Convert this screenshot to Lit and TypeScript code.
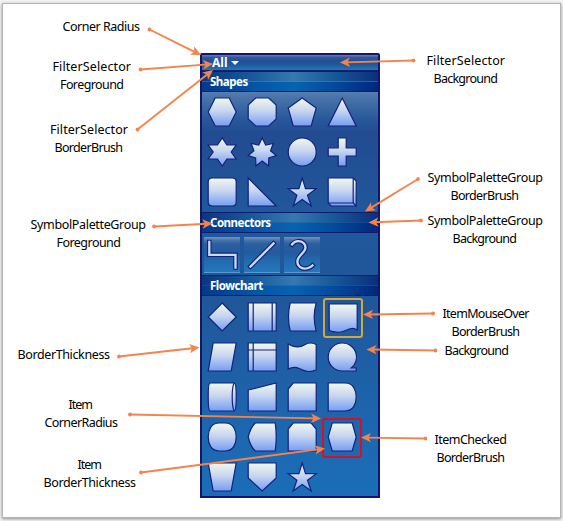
import { LitElement, html, svg, css } from "lit";
import { customElement, property } from "lit/decorators.js";

type Symbol = { d: string; detail?: string; state?: "hover" | "checked" };

const SHAPES: Symbol[] = [
  { d: "M13 6H27L34 20L27 34H13L6 20Z" },
  { d: "M13.500 6H26.500L34 13V27L26.500 34H13.500L6 27V13Z" },
  { d: "M20 6L34 16L29 34H11L6 16Z" },
  { d: "M20 6L34 34H6Z" },
  { d: "M20 6L24.700 13H34L29 20L34 27H24.700L20 34L15.300 27H6L11 20L6 13H15.300Z" },
  { d: "M20 6L23.500 13L31 11.500L28.300 18.800L34 23.500L26.600 26L26.300 34L20 29L13.700 34L13.400 26L6 23.500L11.700 18.800L9 11.500L16.500 13Z" },
  { d: "M20 6A14 14 0 1 1 20 34A14 14 0 1 1 20 6Z" },
  { d: "M16 6H24V16H34V24H24V34H16V24H6V16H16Z" },
  { d: "M10 6H30Q34 6 34 10V30Q34 34 30 34H10Q6 34 6 30V10Q6 6 10 6Z" },
  { d: "M6 6L34 34H6Z" },
  { d: "M20 6L23.3 16.7H34L25.3 23.3L29 34L20 27.5L11 34L14.7 23.3L6 16.7H16.7Z" },
  { d: "M6 6H31L34 9V34H9L6 31Z", detail: "M6 31H31V6M31 31L34 34" },
];

const FLOWCHART: Symbol[] = [
  { d: "M20 6L34 20L20 34L6 20Z" },
  { d: "M6 6H34V34H6Z", detail: "M11 6V34M30 6V34" },
  { d: "M8 6H34Q30 20 34 34H8Q4.500 20 8 6Z" },
  { d: "M7 7H35V33C27 28 23 37 14 35Q10 35 7 33.500Z", state: "hover" },
  { d: "M11 6H34L29 34H6Z" },
  { d: "M6 6H34V34H6Z", detail: "M11 6V34M6 13H34" },
  { d: "M6 7C14 12 19 10 23 7.500Q28 4.500 34 7.500V33C27 36 22 34 17 31.500Q12 29 6 32Z" },
  { d: "M20 6A14 14 0 0 1 29 31H34V34H20A14 14 0 0 1 20 6Z" },
  { d: "M8 6H32Q34 6 34 20T32 34H8Q6 34 6 20T8 6Z", detail: "M32 6Q30 9 30 20T32 34" },
  { d: "M6 13L34 6V34H6Z" },
  { d: "M11 6H34V34H6V12Z" },
  { d: "M6 6H23C31 6 34 13 34 20S31 34 23 34H6Z" },
  { d: "M17 6H23C31 6 34 13 34 20S31 34 23 34H17C9 34 6 27 6 20S9 6 17 6Z" },
  { d: "M13 6H33Q35 20 33 34H13Q8 29 6 20Q8 11 13 6Z" },
  { d: "M11 6H29L34 12V34H6V12Z" },
  { d: "M10 6H30L34 20L30 34H10L6 20Z", state: "checked" },
  { d: "M6 6H34L29 34H11Z" },
  { d: "M6 6H34V21L20 34L6 21Z" },
  { d: "M20 6L23.3 16.700H34L25.300 23.300L29 34L20 27.500L11 34L14.700 23.300L6 16.700H16.700Z" },
];

const CONNECTORS = [
  "M7.300 7V19.800H33.500V32.500",
  "M8.500 31.500L31.500 8.500",
  "M10 9.500C13 5.500 19 5 22 8.500C27 15 18 19 16 24C13.500 31 20 35 26 33C28 32.500 29.500 31.500 30.500 30.500",
];

// text, left, baseline, drawn width
const LABELS: [string, number, number, number][] = [
  ["Corner Radius", 62.5, 31, 77.5],
  ["FilterSelector", 52.5, 71, 78.5],
  ["Foreground", 60, 89, 64],
  ["FilterSelector", 50, 134, 78],
  ["BorderBrush", 54.5, 152, 68.5],
  ["SymbolPaletteGroup", 30.5, 229, 115.5],
  ["Foreground", 56.5, 247, 64.5],
  ["BorderThickness", 17.5, 359, 92.5],
  ["Item", 68.5, 409, 24.5],
  ["CornerRadius", 44.5, 427, 73.5],
  ["Item", 77.5, 469, 24.5],
  ["BorderThickness", 43.5, 487, 92.5],
  ["FilterSelector", 426.5, 65, 78.5],
  ["Background", 433.5, 83, 64.5],
  ["SymbolPaletteGroup", 427.5, 182, 115.5],
  ["BorderBrush", 450.5, 200, 68.5],
  ["SymbolPaletteGroup", 427.5, 225, 115.5],
  ["Background", 452.5, 243, 64.5],
  ["ItemMouseOver", 442.5, 318, 87],
  ["BorderBrush", 451.5, 336, 68.5],
  ["Background", 444.5, 355, 64.5],
  ["ItemChecked", 434.5, 444, 72.5],
  ["BorderBrush", 436.5, 462, 68.5],
];

const ARROWS: [number, number, number, number][] = [
  [149.5, 29.5, 201, 55],
  [140.5, 69.5, 213, 64],
  [137.5, 129.5, 213, 70],
  [413.5, 60.5, 340, 62.5],
  [418, 179, 365, 211.5],
  [421, 220.5, 368.5, 222.5],
  [433, 313.5, 363, 314.5],
  [435.5, 350.5, 366.5, 349.5],
  [425.5, 438.5, 361, 437.5],
  [154, 226.5, 212.5, 223.5],
  [119, 356.5, 199.5, 347.5],
  [130, 414.5, 321, 418.5],
  [141, 472.5, 325, 448.5],
];

@customElement("palette-symbol")
export class PaletteSymbol extends LitElement {
  @property({ attribute: false }) symbol!: Symbol;

  static styles = css`
    :host { display: block; width: 40px; height: 40px; }
    .cell { width: 40px; height: 40px; box-sizing: border-box; position: relative; }
    .cell svg { display: block; width: 40px; height: 40px; }
    .ring { position: absolute; inset: 0; box-sizing: border-box; border-radius: 3px; }
    .hover { border: 2px solid #d5a63c; inset: 1px -1px -1px 1px; }
    .checked { border: 2px solid #d8101f; inset: 1px 0 -1px 0; }
    .body { fill: url(#face); stroke: #12227a; stroke-width: 1.2; }
    .detail { fill: none; stroke: #12227a; stroke-width: 1.2; }
  `;

  render() {
    const { d, detail, state } = this.symbol;
    return html`<div class="cell">
      <svg viewBox="0 0 40 40">
        <defs><linearGradient id="face" x1="0" y1="0" x2="0" y2="1">
          <stop offset="0" stop-color="#f3f8ef"/><stop offset=".45" stop-color="#c8d6f0"/><stop offset="1" stop-color="#759ef3"/>
        </linearGradient></defs>
        <g transform="translate(.2 0)"><path class="body" d=${d} />
        ${detail ? svg`<path class="detail" d=${detail} />` : null}</g>
      </svg>
      ${state ? html`<div class="ring ${state}"></div>` : null}
    </div>`;
  }
}

@customElement("palette-panel")
export class PalettePanel extends LitElement {
  static styles = css`
    :host {
      display: flex; flex-direction: column; box-sizing: border-box; width: 180px; height: 445px;
      border: 2px solid #12176b; border-radius: 2px 2px 0 0;
      font: 700 12px "Noto Sans", "Open Sans", sans-serif; color: #fff;
      background: linear-gradient(#5b7fb0 36px, #4a74aa 42px, #27599a 64px, #224b92 78px, #214f94 100px, #21579b 155px, #20569a 240px, #1c6ab3 400px, #1b6db8 441px);
    }
    .filter {
      display: flex; align-items: center; gap: 4px; height: 16px; padding-left: 10px; box-sizing: border-box;
      border-bottom: 1px solid #15206e;
      background: linear-gradient(#6470b0 0 1px, #36589d 2px, #20508f 6px, #1f5a9d 10px, #2277b8 15px);
    }
    .caret { width: 0; height: 0; border: 4px solid transparent; border-top-color: #fff; border-bottom: 0; }
    .group { display: flex; flex-direction: column; }
    .head {
      height: 21px; box-sizing: border-box; display: flex; align-items: center; padding: 0 0 0 8px;
      border-top: 1px solid #101b70; border-bottom: 1px solid #101b70;
      background:
        linear-gradient(90deg, #0b3680, #195b9d 30%, #3579b0 52%, #185999 74%, #0a2f7d) 0 0 / 100% 50% no-repeat,
        linear-gradient(90deg, #03388c, #0457a6 32%, #0763b0 52%, #034e9e 72%, #01277d) 0 100% / 100% 50% no-repeat;
    }
    .name { font-size: 11.500px; letter-spacing: -0.480px; line-height: 18px; }
    .grid { display: grid; grid-template-columns: repeat(4, 40px); grid-auto-rows: 40px; }
    .links { display: flex; gap: 4px; padding: 4px 0 2px 2px; }
    .tile {
      width: 36px; height: 36px; box-sizing: border-box; border-bottom: 1px solid #5599d2;
      background: linear-gradient(#7590bf, #416fa8 4px, #2a5f9f 7px, #225b9f 16px, #226bb0 24px, #2577bb);
    }
    .tile svg { display: block; width: 36px; height: 36px; }
    .edge { fill: none; stroke: #13237a; stroke-width: 4.600; stroke-linecap: square; }
    .core { fill: none; stroke: #cddafb; stroke-width: 2.300; stroke-linecap: square; }
    .pad-top { padding-top: 1px; }
  `;

  private head(name: string) {
    return html`<div class="head"><span class="name">${name}</span></div>`;
  }

  render() {
    return html`
      <div class="filter"><span>All</span><span class="caret"></span></div>
      <section class="group">
        ${this.head("Shapes")}
        <div class="grid">${SHAPES.map((s) => html`<palette-symbol .symbol=${s}></palette-symbol>`)}</div>
      </section>
      <section class="group">
        ${this.head("Connectors")}
        <div class="links">${CONNECTORS.map((d) => html`<div class="tile">
          <svg viewBox="2 2 36 36"><path class="edge" d=${d} /><path class="core" d=${d} /></svg>
        </div>`)}</div>
      </section>
      <section class="group">
        ${this.head("Flowchart")}
        <div class="grid pad-top">${FLOWCHART.map((s) => html`<palette-symbol .symbol=${s}></palette-symbol>`)}</div>
      </section>`;
  }
}

@customElement("app-root")
export class AppRoot extends LitElement {
  static styles = css`
    :host { display: block; width: 563px; height: 521px; box-sizing: border-box; padding: 4px 3px 4px 3px; background: #f3f3f3; overflow: hidden; }
    .sheet {
      height: 513px; width: 557px; box-sizing: border-box; padding: 49px 0 0 197px; background: #fff;
      box-shadow: 0 0 0 1px #b4b4b4, 0 1px 3px 1px #8d8d8d;
    }
    .canvas { position: absolute; left: 0; top: 0; width: 563px; height: 521px; }
    .label { font: 12.500px "Noto Sans", "Open Sans", sans-serif; fill: #000; }
    .line { stroke: #f5834b; stroke-width: 1.9; }
    .mark { fill: #f5834b; }
  `;

  private arrow([x1, y1, x2, y2]: [number, number, number, number]) {
    const angle = (Math.atan2(y2 - y1, x2 - x1) * 180) / Math.PI;
    const length = Math.hypot(x2 - x1, y2 - y1);
    return svg`<g transform="translate(${x1} ${y1}) rotate(${angle})">
      <circle class="mark" r="1.9" />
      <line class="line" x2=${length - 5} />
      <path class="mark" d="M${length} 0l-10 -4.700l2.500 4.700l-2.500 4.700Z" />
    </g>`;
  }

  render() {
    return html`<div class="sheet"><palette-panel></palette-panel></div>
      <svg class="canvas" viewBox="0 0 563 521">
        ${LABELS.map(([t, x, y, w]) => svg`<text class="label" x=${x} y=${y} textLength=${w}>${t}</text>`)}
        ${ARROWS.map((a) => this.arrow(a))}
      </svg>`;
  }
}
